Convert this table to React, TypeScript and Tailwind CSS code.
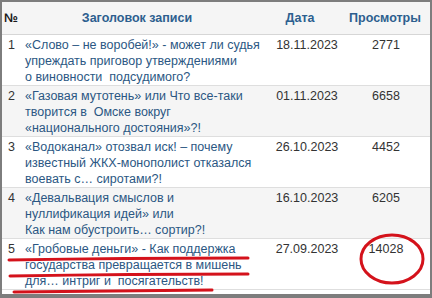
const rows = [
  {
    n: "1",
    title: ["«Слово – не воробей!» - может ли судья", "упреждать приговор утверждениями", "о виновности  подсудимого?"],
    date: "18.11.2023",
    views: "2771",
  },
  {
    n: "2",
    title: ["«Газовая мутотень» или Что все-таки", "творится в  Омске вокруг", "«национального достояния»?!"],
    date: "01.11.2023",
    views: "6658",
  },
  {
    n: "3",
    title: ["«Водоканал» отозвал иск! – почему", "известный ЖКХ-монополист отказался", "воевать с… сиротами?!"],
    date: "26.10.2023",
    views: "4452",
  },
  {
    n: "4",
    title: ["«Девальвация смыслов и", "нуллификация идей» или", "Как нам обустроить… сортир?!"],
    date: "16.10.2023",
    views: "6205",
  },
  {
    n: "5",
    title: ["«Гробовые деньги» - Как поддержка", "государства превращается в мишень", "для… интриг и  посягательств!"],
    date: "27.09.2023",
    views: "14028",
  },
];

export default function App() {
  return (
    <div className="relative h-[298px] w-[432px] overflow-hidden border-2 border-b-[4px] border-[#7d7d7d] bg-white font-['Liberation_Sans',Arial,sans-serif]">
      <table className="w-full table-fixed border-collapse text-[12.5px] leading-[16px]">
        <thead>
          <tr className="h-[32px] border-b border-[#d6d6d6] bg-[#f5f5f5] text-[12.5px] font-bold">
            <th className="w-[18px] pl-[2px] text-left text-[#1a1a1a]">№</th>
            <th className="w-[242px] pr-[8px] text-center text-[#2d5f8f]">Заголовок записи</th>
            <th className="w-[80px] pr-[4px] text-center text-[#2d5f8f]">Дата</th>
            <th className="whitespace-nowrap pr-[2px] text-center text-[#2d5f8f]">Просмотры</th>
          </tr>
        </thead>
        <tbody>
          {rows.map((r, i) => (
            <tr
              key={r.n}
              className={`border-b border-[#dedede] align-top ${i % 2 === 1 ? "bg-[#f5f5f5]" : "bg-white"}`}
            >
              <td className="pl-[6px] pt-[2px] text-[#333]">{r.n}</td>
              <td className="pl-[5px] pt-[2px] text-[#2b5783]">
                {r.title.map((l) => (
                  <div key={l} className="whitespace-pre">{l}</div>
                ))}
              </td>
              <td className="whitespace-nowrap pl-[10px] pt-[2px] text-center text-[#333]">{r.date}</td>
              <td className="pt-[2px] text-center text-[#333]">{r.views}</td>
            </tr>
          ))}
        </tbody>
      </table>
      <svg className="pointer-events-none absolute left-0 top-0" width="432" height="298" viewBox="0 0 432 298">
        <g fill="none" stroke="#d4121b" strokeWidth="3" strokeLinecap="round">
          <path d="M7 258 Q120 256 246 256" />
          <path d="M8 274 Q130 272 246 272" />
          <path d="M12 290 Q110 289 210 288" />
          <ellipse cx="390" cy="257" rx="31" ry="24" />
        </g>
      </svg>
    </div>
  );
}
